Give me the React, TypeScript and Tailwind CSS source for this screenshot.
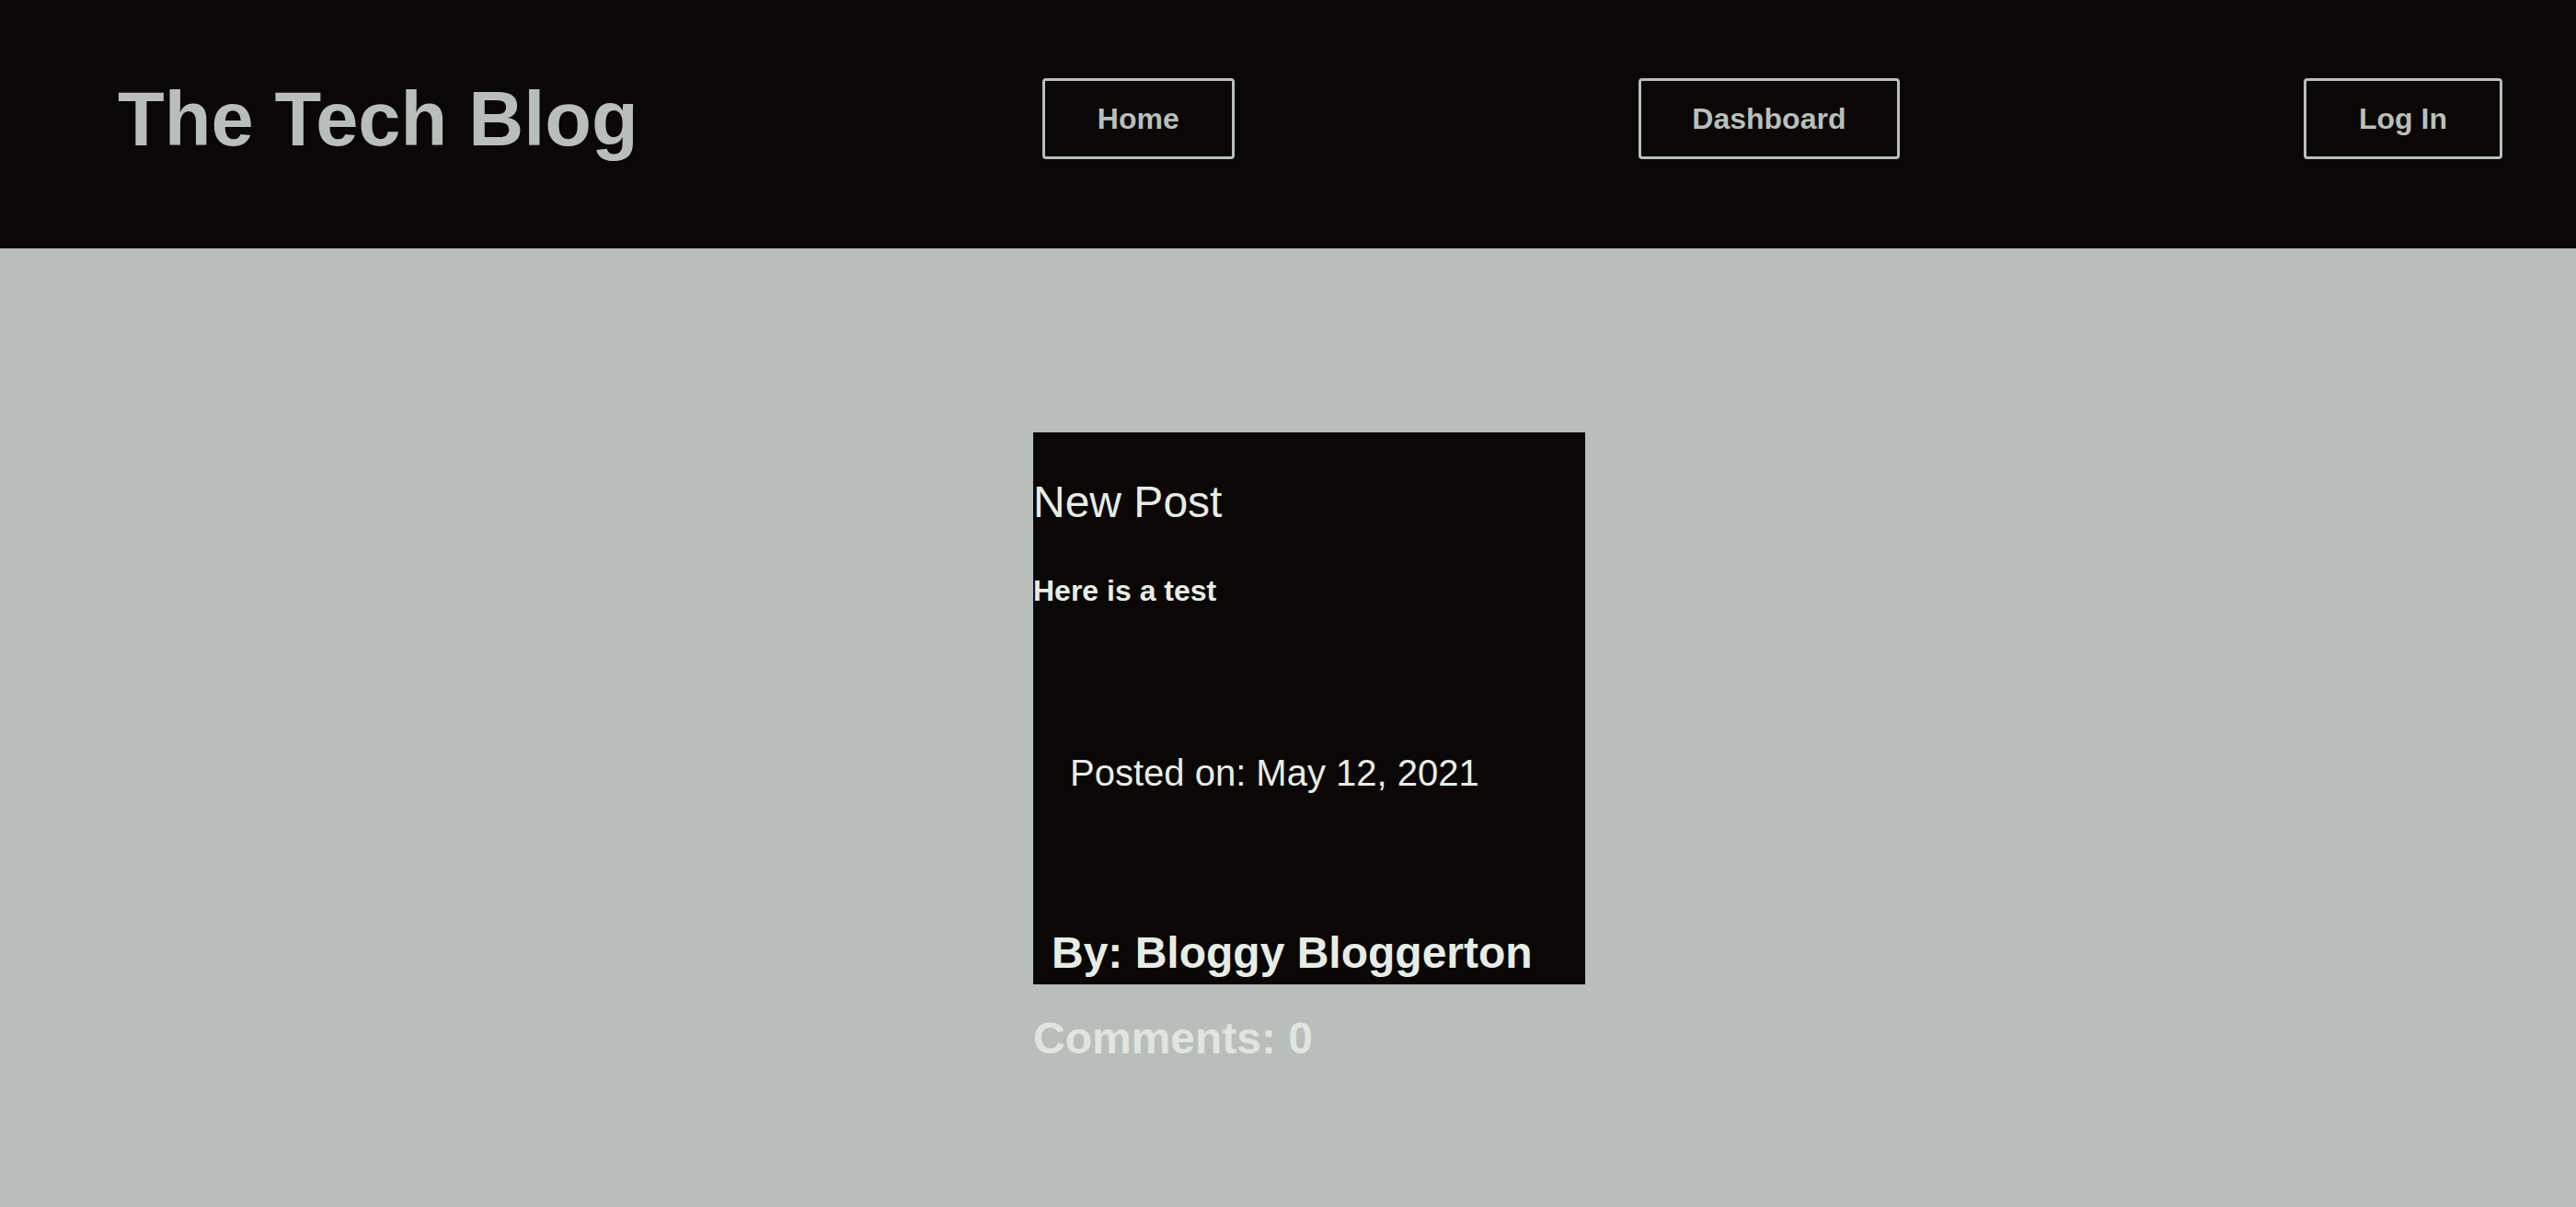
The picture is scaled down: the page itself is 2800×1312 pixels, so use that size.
export default function App() {
  return (
    <div
      className="min-h-screen w-full bg-[#b8bfba]"
      style={{ fontFamily: '"Liberation Sans", Arial, Helvetica, sans-serif' }}
    >
      <header className="flex h-[270px] items-center justify-between bg-[#0b0706] pb-[12px] pl-[128px] pr-[80px]">
        <h1 className="text-[83px] font-bold leading-none text-[#b8bfba]">The Tech Blog</h1>
        <a className="w-[209px] rounded-[4px] border-[3px] border-[#b8bfba] py-[25px] text-center text-[32px] font-bold leading-none text-[#b8bfba]">
          Home
        </a>
        <a className="w-[284px] rounded-[4px] border-[3px] border-[#b8bfba] py-[25px] text-center text-[32px] font-bold leading-none text-[#b8bfba]">
          Dashboard
        </a>
        <a className="w-[216px] rounded-[4px] border-[3px] border-[#b8bfba] py-[25px] text-center text-[32px] font-bold leading-none text-[#b8bfba]">
          Log In
        </a>
      </header>
      <main className="flex justify-center pl-[46px] pt-[200px]">
        <div className="flex w-[600px] flex-col">
          <article className="flex h-[600px] flex-col bg-[#0b0706] text-[#e6ede5]">
            <h2 className="mt-[52px] text-[48px] font-normal leading-none">New Post</h2>
            <p className="mt-[56px] text-[32px] font-bold leading-none">Here is a test</p>
            <p className="mt-[162px] pl-[40px] text-[40px] leading-none">Posted on: May 12, 2021</p>
            <p className="mt-[152px] pl-[20px] text-[48px] font-bold leading-none">By: Bloggy Bloggerton</p>
          </article>
          <p className="mt-[35px] text-[48px] font-bold leading-none text-[#dfe6de]">Comments: 0</p>
        </div>
      </main>
    </div>
  );
}
